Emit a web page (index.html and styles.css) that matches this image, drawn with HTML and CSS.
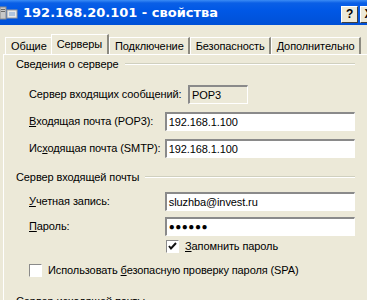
FILE: index.html
```html
<!DOCTYPE html>
<html lang="ru">
<head>
    <meta charset="UTF-8">
    <title>192.168.20.101 - свойства</title>
    <link rel="stylesheet" href="styles.css">
</head>
<body>
<div class="window">
    <!-- Заголовок окна -->
    <div class="titlebar">
        <svg class="title-icon" width="18" height="14" viewBox="0 0 18 14">
            <rect x="0" y="1" width="6" height="12" fill="#c8c8c8" stroke="#8a8a8a"/>
            <rect x="1" y="3" width="4" height="1" fill="#6a6a6a"/>
            <rect x="1" y="5" width="4" height="1" fill="#6a6a6a"/>
            <rect x="7" y="4" width="10" height="8" fill="#e8e8e8" stroke="#9a9a9a"/>
            <rect x="9" y="6" width="6" height="4" fill="#b0c4de"/>
        </svg>
        <div class="title-text">192.168.20.101 - свойства</div>
        <div class="title-buttons">
            <div class="tb-btn">?</div>
            <div class="tb-btn tb-close">X</div>
        </div>
    </div>

    <!-- Вкладки -->
    <div class="tabs">
        <div class="tab">Общие</div>
        <div class="tab active">Серверы</div>
        <div class="tab">Подключение</div>
        <div class="tab">Безопасность</div>
        <div class="tab">Дополнительно</div>
    </div>

    <div class="panel">
        <div class="group-title">Сведения о сервере</div>
        <div class="row">
            <label class="lbl">Сервер вхо<u>д</u>ящих сообщений:</label>
            <div class="field readonly">POP3</div>
        </div>
        <div class="row">
            <label class="lbl"><u>В</u>ходящая почта (POP3):</label>
            <div class="field wide">192.168.1.100</div>
        </div>
        <div class="row">
            <label class="lbl">Ис<u>х</u>одящая почта (SMTP):</label>
            <div class="field wide">192.168.1.100</div>
        </div>

        <div class="group-title second">Сервер входящей почты</div>
        <div class="row">
            <label class="lbl"><u>У</u>четная запись:</label>
            <div class="field wide">sluzhba@invest.ru</div>
        </div>
        <div class="row tight">
            <label class="lbl"><u>П</u>ароль:</label>
            <div class="field wide dots">●●●●●●</div>
        </div>
        <div class="check-row remember">
            <span class="checkbox checked">
                <svg width="9" height="9" viewBox="0 0 9 9"><path d="M1 4 L3 6.5 L8 1" fill="none" stroke="#111" stroke-width="2"/></svg>
            </span>
            <span><u>З</u>апомнить пароль</span>
        </div>
        <div class="check-row spa">
            <span class="checkbox"></span>
            <span>Использовать <u>б</u>езопасную проверку пароля (SPA)</span>
        </div>

        <div class="group-title third">Сервер исходящей почты</div>
    </div>
</div>
</body>
</html>
```

FILE: styles.css
```css
body {
    margin: 0;
    font-family: "Liberation Sans", Arial, sans-serif;
    font-size: 11px;
    letter-spacing: -0.1px;
    color: #000;
    background-color: #ece9d8;
    overflow: hidden;
}

.window {
    width: 367px;
    height: 300px;
    overflow: hidden;
}

/* Заголовок окна */
.titlebar {
    height: 25px;
    display: flex;
    align-items: center;
    background: linear-gradient(#3b8cf5 0, #0a5fe6 3px, #0058e6 40%, #0050d6 100%);
    color: white;
}

.title-icon {
    margin-right: 5px;
}

.title-text {
    font-family: "DejaVu Sans", sans-serif;
    font-weight: bold;
    font-size: 13px;
    letter-spacing: 0;
    flex: 1;
    white-space: nowrap;
}

.title-buttons {
    display: flex;
    gap: 2px;
    margin-right: -10px;
    margin-top: 3px;
}

.tb-btn {
    width: 15px;
    height: 15px;
    background-color: #ece9d8;
    border: 1px solid;
    border-color: #fff #404040 #404040 #fff;
    color: #000;
    font-weight: bold;
    font-size: 12px;
    display: flex;
    justify-content: center;
    align-items: center;
}

/* Вкладки */
.tabs {
    display: flex;
    align-items: flex-end;
    padding-left: 5px;
    height: 29px;
}

.tab {
    height: 16px;
    padding: 0 4px 0 5px;
    border-top: 1px solid #fff;
    border-left: 1px solid #fff;
    border-right: 2px solid #8c8a80;
    display: flex;
    align-items: center;
    white-space: nowrap;
}

.tab.active {
    height: 18px;
    padding: 0 5px 1px;
    margin-left: -2px;
    position: relative;
    z-index: 1;
    background-color: #ece9d8;
}

/* Содержимое вкладки */
.panel {
    height: 260px;
    margin-left: 3px;
    border-left: 1px solid #fff;
    border-top: 1px solid #fff;
    padding-left: 12px;
    padding-right: 12px;
}

.group-title {
    display: flex;
    align-items: center;
    height: 14px;
    margin-top: 2px;
}

.group-title::after {
    content: "";
    flex: 1;
    margin-left: 6px;
    border-top: 1px solid #d0d0bf;
    border-bottom: 1px solid #fff;
}

.group-title.second {
    margin-top: 12px;
}

.group-title.third {
    margin-top: 17px;
}

.row {
    display: flex;
    align-items: center;
    height: 20px;
    margin-top: 7px;
    padding-left: 13px;
}

.group-title + .row {
    margin-top: 13px;
}

.group-title.second + .row {
    margin-top: 7px;
}

.row.tight {
    margin-top: 5px;
}

.lbl {
    width: 137px;
    white-space: nowrap;
}

.field {
    height: 16px;
    line-height: 16px;
    border-top: 2px solid #8a8a8a;
    border-left: 2px solid #8a8a8a;
    border-right: 1px solid #fff;
    border-bottom: 1px solid #fff;
    padding-left: 2px;
    white-space: nowrap;
}

.field.readonly {
    width: 55px;
    margin-left: 22px;
    background-color: #ece9d8;
}

.field.wide {
    width: 187px;
    background-color: #fff;
}

.field.dots {
    font-size: 10px;
    letter-spacing: 0.5px;
}

.check-row {
    display: flex;
    align-items: center;
    gap: 6px;
    height: 14px;
}

.check-row.remember {
    margin-top: 3px;
    padding-left: 150px;
}

.check-row.spa {
    margin-top: 10px;
    padding-left: 13px;
}

.checkbox {
    width: 11px;
    height: 11px;
    border-top: 1px solid #8a8a8a;
    border-left: 1px solid #8a8a8a;
    border-right: 1px solid #fff;
    border-bottom: 1px solid #fff;
    background-color: #fff;
    display: flex;
    justify-content: center;
    align-items: center;
}
```
